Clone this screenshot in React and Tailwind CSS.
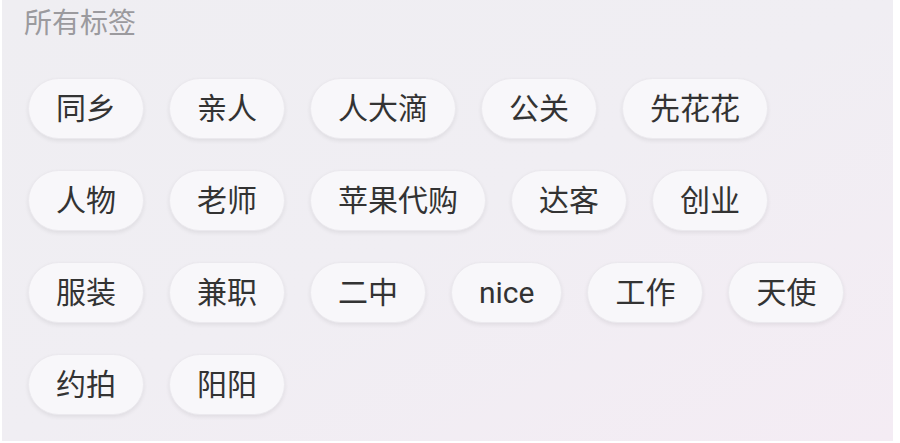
import React from 'react';

const rows = [
  ['同乡', '亲人', '人大滴', '公关', '先花花'],
  ['人物', '老师', '苹果代购', '达客', '创业'],
  ['服装', '兼职', '二中', 'nice', '工作', '天使'],
  ['约拍', '阳阳'],
];

const Tag = ({ label }) => (
  <div className="h-[61px] px-[27px] flex items-center rounded-full bg-[#f8f7fa] border border-[#ebe9ee] shadow-[0_2px_4px_rgba(0,0,0,0.07)] text-[30px] text-[#333333] leading-none whitespace-nowrap">
    {label}
  </div>
);

export default function App() {
  return (
    <div
      className="w-[900px] h-[443px] bg-white overflow-hidden"
      style={{ fontFamily: 'Roboto, "Noto Sans CJK SC", sans-serif' }}
    >
      {/* tag panel */}
      <div className="ml-[2px] w-[891px] h-[441px] bg-gradient-to-br from-[#efeef2] via-[#f0eef3] to-[#f4ecf4] flex flex-col">
        <div className="pl-[22px] pt-[8px] h-[78px] text-[28px] leading-[32px] text-[#9b9a9e]">所有标签</div>
        <div className="pl-[26px] flex flex-col gap-[31px]">
          {rows.map((row, i) => (
            <div key={i} className="flex gap-[25px]">
              {row.map((t) => (
                <Tag key={t} label={t} />
              ))}
            </div>
          ))}
        </div>
      </div>
    </div>
  );
}
